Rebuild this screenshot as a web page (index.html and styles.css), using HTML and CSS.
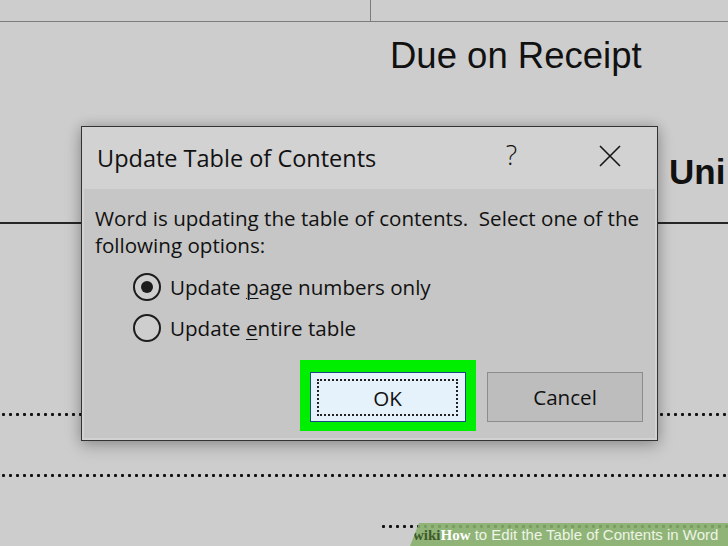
FILE: index.html
```html
<!DOCTYPE html>
<html>
<head>
<meta charset="utf-8">
<link rel="stylesheet" href="styles.css">
</head>
<body>
<div class="doc">
  <div class="cells"><div class="cell"></div></div>
  <div class="due">Due on Receipt</div>
  <div class="uni">Uni</div>
  <div class="rule"></div>
  <div class="dots dots-a"></div>
  <div class="dots dots-b"></div>
  <div class="dots dots-c"></div>
</div>

<div class="dialog">
  <div class="titlebar">
    <div class="title">Update Table of Contents</div>
    <div class="help">?</div>
    <svg class="close" width="22" height="22" viewBox="0 0 22 22"><path d="M1 1L21 21M21 1L1 21" stroke="#151515" stroke-width="1.6" fill="none"/></svg>
  </div>
  <div class="dbody">
    <p class="msg">Word is updating the table of contents.&nbsp; Select one of the<br>following options:</p>
    <div class="options">
      <div class="opt"><span class="radio checked"></span><span>Update <u>p</u>age numbers only</span></div>
      <div class="opt"><span class="radio"></span><span>Update <u>e</u>ntire table</span></div>
    </div>
    <div class="actions">
      <div class="highlight"><div class="btn ok"><span class="focus">OK</span></div></div>
      <div class="btn cancel">Cancel</div>
    </div>
  </div>
</div>

<div class="banner"><span class="wiki">wiki</span><span class="how">How</span> to Edit the Table of Contents in Word</div>
</body>
</html>
```
FILE: styles.css
```css
html, body { margin: 0; padding: 0; }
body {
  width: 728px;
  height: 546px;
  overflow: hidden;
  position: relative;
  background: #cdcdcd;
  font-family: "Liberation Sans", Arial, sans-serif;
  color: #111;
}
.cells { display: flex; height: 21px; border-bottom: 1px solid #7c7c7c; }
.cell { width: 370px; border-right: 1px solid #7c7c7c; }
.due { margin: 14px 0 0 390px; font-size: 36.5px; line-height: 40px; white-space: nowrap; }
.uni { margin: 76px 0 0 669px; font-size: 35px; line-height: 40px; font-weight: bold; white-space: nowrap; }
.rule { margin-top: 30px; border-top: 2px solid #262626; }
.dots {
  height: 3px;
  background: radial-gradient(circle, #111 1.3px, rgba(0,0,0,0) 1.8px) 0 0 / 7px 3px repeat-x;
}
.dots-a { margin-top: 189px; }
.dots-b { margin-top: 58px; }
.dots-c { margin-top: 48px; margin-left: 380px; }

.dialog {
  position: absolute;
  left: 81px;
  top: 126px;
  width: 575px;
  height: 313px;
  border: 1px solid #333;
  background: #d2d2d2;
  box-shadow: 0 0 12px rgba(0,0,0,0.22), 0 6px 16px rgba(0,0,0,0.18);
  font-family: "Open Sans", "Noto Sans", sans-serif;
  color: #111;
}
.titlebar {
  height: 62px;
  box-sizing: border-box;
  display: flex;
  align-items: flex-start;
  padding: 16px 36px 0 15px;
}
.title { flex: 1; font-size: 23.5px; line-height: 30px; white-space: nowrap; }
.help { font-size: 27px; font-weight: 300; line-height: 30px; margin: -3px 82px 0 0; }
.close { margin-top: 2px; }

.dbody {
  margin: 0 2px 2px;
  height: 249px;
  box-sizing: border-box;
  background: #c6c6c6;
  padding: 16px 12px 0 11px;
}
.msg { margin: 0; font-size: 20.6px; line-height: 27px; white-space: nowrap; }
.options { margin: 7px 0 0 38px; }
.opt { height: 41px; display: flex; align-items: center; gap: 9px; font-size: 20.6px; white-space: nowrap; }
.opt u { text-underline-offset: 3px; text-decoration-thickness: 1px; }
.radio {
  width: 28px; height: 28px;
  box-sizing: border-box;
  border: 2px solid #1c1c1c;
  border-radius: 50%;
  background: #cecece;
  display: flex; align-items: center; justify-content: center;
}
.radio.checked::after {
  content: "";
  width: 12px; height: 12px;
  border-radius: 50%;
  background: #1c1c1c;
}
.actions {
  margin-top: 12px;
  display: flex;
  justify-content: flex-end;
  align-items: flex-start;
  gap: 11px;
}
.highlight { background: #00ee00; padding: 12px 10px 9px 10px; }
.btn {
  width: 156px; height: 50px;
  box-sizing: border-box;
  display: flex; align-items: center; justify-content: center;
  font-size: 20.6px;
}
.ok { background: #e5f1fb; border: 1px solid #1a4a86; padding: 6px 7px 5px 6px; }
.focus {
  flex: 1; align-self: stretch;
  display: flex; align-items: center; justify-content: center;
  border: 2px dotted #222;
}
.cancel { margin-top: 12px; background: #bdbdbd; border: 1px solid #8c8c8c; }

.banner {
  position: absolute;
  right: 0;
  bottom: 0;
  width: 318px;
  height: 23px;
  box-sizing: border-box;
  padding-left: 3px;
  background: rgba(135, 176, 108, 0.88);
  clip-path: polygon(9px 0, 100% 0, 100% 100%, 0 100%);
  font-size: 15px;
  line-height: 24px;
  color: #eef4e6;
  white-space: nowrap;
}
.wiki { font-family: "Liberation Serif", serif; font-weight: bold; color: #3f5a2a; }
.how { font-family: "Liberation Serif", serif; font-weight: bold; color: #fff; }
```
